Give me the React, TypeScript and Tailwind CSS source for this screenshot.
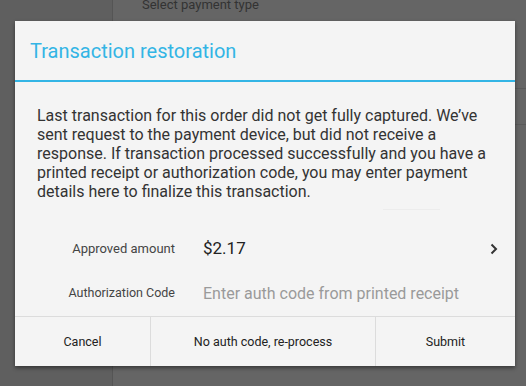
import React from 'react';

const font = { fontFamily: 'Roboto, "Noto Sans", sans-serif' };

const Chevron = () => (
  <svg width="8" height="12" viewBox="0 0 8 12" fill="none">
    <path d="M1.5 1.5 L6 6 L1.5 10.5" stroke="#333" strokeWidth="2" />
  </svg>
);

export default function App() {
  return (
    <div className="relative h-[386px] w-[526px] overflow-hidden bg-[#656565]" style={font}>
      {/* screen behind the dialog */}
      <div className="flex h-full">
        <div className="w-[113px] border-r border-[#555] bg-[#5f5f5f]" />
        <div className="flex-1">
          <div className="pl-[29px] text-[13px] leading-[10px] text-[#333]">Select payment type</div>
          <div className="mt-[78px] h-px bg-[#5a5a5a]" />
          <div className="mt-[35px] h-px bg-[#5a5a5a]" />
        </div>
      </div>

      {/* dialog */}
      <div className="absolute left-[15px] top-[21px] flex h-[345px] w-[500px] flex-col bg-[#f4f4f4] shadow-[0_2px_4px_rgba(0,0,0,0.45)]">
        <div className="flex h-[59px] items-center px-[15px] text-[20px] text-[#33b5e5]">
          Transaction restoration
        </div>
        <div className="h-[2px] bg-[#33b5e5]" />

        <div className="flex flex-1 flex-col">
          <p className="pl-[22px] pr-[20px] pt-[24px] text-[16px] leading-[19px] text-[#333]">
            Last transaction for this order did not get fully captured. We’ve sent request to the payment
            device, but did not receive a response. If transaction processed successfully and you have a
            printed receipt or authorization code, you may enter payment details here to finalize this
            transaction.
          </p>
          <div className="ml-[368px] mt-[8px] h-px w-[57px] bg-[#ececec]" />

          <div className="mt-[16px] flex h-[45px] items-center">
            <div className="w-[160px] text-right text-[13px] text-[#444]">Approved amount</div>
            <div className="ml-[28px] flex-1 text-[17px] text-[#222]">$2.17</div>
            <div className="mr-[17px]">
              <Chevron />
            </div>
          </div>
          <div className="flex h-[45px] items-center">
            <div className="w-[160px] text-right text-[12.5px] text-[#444]">Authorization Code</div>
            <div className="ml-[28px] flex-1 text-[16px] text-[#9a9a9a]">Enter auth code from printed receipt</div>
          </div>
        </div>

        <div className="flex h-[50px] border-t border-[#dcdcdc] text-[12.5px] text-[#222]">
          <button className="flex w-[136px] items-center justify-center border-r border-[#dcdcdc] pt-[2px]">
            Cancel
          </button>
          <button className="flex w-[225px] items-center justify-center border-r border-[#dcdcdc] pt-[2px]">
            No auth code, re-process
          </button>
          <button className="flex flex-1 items-center justify-center pt-[2px]">Submit</button>
        </div>
      </div>
    </div>
  );
}
